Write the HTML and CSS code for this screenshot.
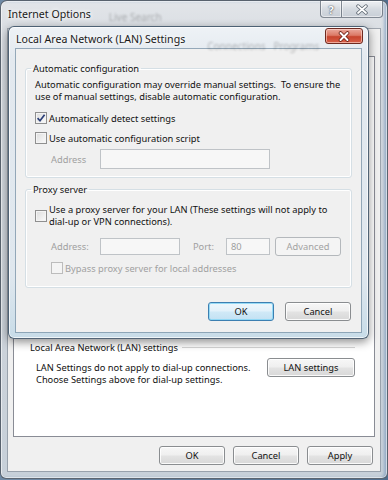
FILE: index.html
```html
<!DOCTYPE html>
<html>
<head>
<meta charset="utf-8">
<title>LAN Settings</title>
<link rel="stylesheet" href="styles.css">
</head>
<body>
<div class="desktop">
  <div class="win outer">
    <div class="titlebar outer-title">
      <span class="title">Internet Options</span>
      <span class="ghost ghost-outer">Live Search</span>
      <div class="caption-btns">
        <span class="cap cap-help">?</span>
        <span class="cap cap-close">
          <svg width="14" height="11" viewBox="0 0 14 11"><path d="M3 2 L11 9 M11 2 L3 9" stroke="#5b6570" stroke-width="3.4" stroke-linecap="round"/><path d="M3 2 L11 9 M11 2 L3 9" stroke="#fff" stroke-width="1.8" stroke-linecap="round"/></svg>
        </span>
      </div>
    </div>
    <div class="outer-client">
      <div class="tabs"></div>
      <div class="page">
        <div class="lan-section">
          <div class="etched-head"><span class="etched-label">Local Area Network (LAN) settings</span><span class="rule"></span></div>
          <div class="lan-row">
            <p class="lan-text">LAN Settings do not apply to dial-up connections.<br>Choose Settings above for dial-up settings.</p>
            <button class="btn lan-btn">LAN settings</button>
          </div>
        </div>
      </div>
      <div class="outer-btns">
        <button class="btn wbtn">OK</button>
        <button class="btn wbtn">Cancel</button>
        <button class="btn wbtn">Apply</button>
      </div>
    </div>
  </div>

  <div class="win lan-dialog">
    <div class="titlebar lan-title">
      <span class="title">Local Area Network (LAN) Settings</span>
      <span class="ghost ghost-inner">Connections&nbsp;&nbsp;&nbsp;Programs</span>
      <span class="red-close">
        <svg width="14" height="11" viewBox="0 0 14 11"><path d="M3.5 2 L10.5 9 M10.5 2 L3.5 9" stroke="#6a1f14" stroke-width="3.6" stroke-linecap="round"/><path d="M3.5 2 L10.5 9 M10.5 2 L3.5 9" stroke="#fff" stroke-width="2" stroke-linecap="round"/></svg>
      </span>
    </div>
    <div class="lan-client">
      <fieldset class="group g-auto">
        <legend>Automatic configuration</legend>
        <p class="desc">Automatic configuration may override manual settings.&nbsp; To ensure the<br>use of manual settings, disable automatic configuration.</p>
        <div class="check-row r-detect"><span class="cb checked"><svg width="10" height="10" viewBox="0 0 10 10"><path d="M1.6 5.2 L4 7.8 L8.6 1.8" fill="none" stroke="#2c3f78" stroke-width="1.7"/></svg></span><span>Automatically detect settings</span></div>
        <div class="check-row r-script"><span class="cb"></span><span>Use automatic configuration script</span></div>
        <div class="field-row r-addr1"><span class="dim lbl-addr1">Address</span><span class="input in-addr1"></span></div>
      </fieldset>
      <fieldset class="group g-proxy">
        <legend>Proxy server</legend>
        <div class="check-row r-proxy"><span class="cb"></span><span class="two-line">Use a proxy server for your LAN (These settings will not apply to<br>dial-up or VPN connections).</span></div>
        <div class="field-row r-addr2">
          <span class="dim lbl-addr2">Address:</span><span class="input in-addr2"></span>
          <span class="dim lbl-port">Port:</span><span class="input in-port"><span class="dim">80</span></span>
          <button class="btn btn-dis adv">Advanced</button>
        </div>
        <div class="check-row r-bypass"><span class="cb cb-dis"></span><span class="dim">Bypass proxy server for local addresses</span></div>
      </fieldset>
      <div class="dlg-btns">
        <button class="btn btn-def dbtn">OK</button>
        <button class="btn dbtn">Cancel</button>
      </div>
    </div>
  </div>
</div>
</body>
</html>
```
FILE: styles.css
```css
* { box-sizing: border-box; }
html, body { margin: 0; padding: 0; }
body {
  width: 388px;
  height: 480px;
  overflow: hidden;
  background: linear-gradient(90deg, #6f8aa6, #4f6e8e);
  font-family: "Noto Sans", "DejaVu Sans", sans-serif;
  font-size: 9.3px;
  color: #111;
}
.desktop { position: relative; width: 388px; height: 480px; }

.win { display: flex; flex-direction: column; }

/* ---------- outer window ---------- */
.outer {
  width: 388px;
  height: 479px;
  border: 1px solid rgba(60, 70, 82, 0.8);
  border-radius: 7px 7px 6px 6px;
  background: linear-gradient(180deg, #e2e5e9 0%, #d3d8de 12%, #cdd3da 60%, #c7d0d9 100%);
  box-shadow: inset 0 0 0 1px rgba(255, 255, 255, 0.55), inset -3px 0 3px rgba(90, 130, 175, 0.45);
}
.titlebar { display: flex; flex: none; }
.outer-title { height: 28px; padding-left: 7px; }
.title {
  font-size: 10.6px;
  line-height: 13px;
  color: #1a1a1a;
  text-shadow: 0 0 4px #fff, 0 0 6px #fff;
  white-space: nowrap;
}
.outer-title .title { margin-top: 7px; }
.ghost {
  filter: blur(1.3px);
  opacity: 0.28;
  font-size: 10px;
  white-space: nowrap;
}
.ghost-outer { margin-top: 9px; margin-left: 18px; }
.caption-btns { margin-left: auto; margin-right: 4px; display: flex; height: 17px; }
.cap {
  display: flex;
  align-items: center;
  justify-content: center;
  height: 17px;
  border: 1px solid rgba(85, 95, 108, 0.7);
  border-top: none;
  background: linear-gradient(180deg, rgba(255,255,255,0.55), rgba(205,212,220,0.6) 50%, rgba(185,194,204,0.6));
  box-shadow: inset 0 0 0 1px rgba(255,255,255,0.5);
}
.cap-help {
  width: 22px;
  border-radius: 0 0 0 4px;
  color: #fff;
  font-weight: bold;
  font-size: 11px;
  text-shadow: 0 0 2px #49525c, 0 0 1px #49525c;
}
.cap-close { width: 41px; border-left: none; border-radius: 0 0 4px 0; }

.outer-client {
  flex: 1;
  margin: 0 7px 7px 7px;
  background: #f0f0f0;
  padding: 6px 5px 0 5px;
  display: flex;
  flex-direction: column;
  box-shadow: 0 0 0 1px rgba(120, 130, 142, 0.6);
}
.tabs { height: 21px; flex: none; }
.page {
  flex: 1;
  background: #fff;
  border: 1px solid #898c95;
  display: flex;
  flex-direction: column;
  justify-content: flex-end;
  padding: 0 19px 50px 16px;
}
.etched-head { display: flex; align-items: center; height: 12px; line-height: 12px; }
.etched-label { white-space: nowrap; }
.rule { flex: 1; height: 2px; margin-left: 4px; border-top: 1px solid #d5d5d5; border-bottom: 1px solid #fff; }
.lan-row { display: flex; margin-top: 4px; padding-left: 6px; }
.lan-text { margin: 4px 0 0 0; line-height: 12px; white-space: nowrap; }
.lan-btn { margin-left: auto; width: 88px; height: 19px; }

.outer-btns {
  flex: none;
  display: flex;
  justify-content: flex-end;
  gap: 8px;
  padding: 9px 2px 6px 0;
}
.wbtn { width: 66px; height: 19px; }

/* ---------- buttons ---------- */
.btn {
  font-family: inherit;
  font-size: 9.3px;
  color: #111;
  padding: 0;
  border: 1px solid #8a8d90;
  border-radius: 3px;
  background: linear-gradient(180deg, #f7f7f7 0%, #efefef 48%, #e3e3e3 52%, #d8d8d8 100%);
  box-shadow: inset 0 0 0 1px rgba(255, 255, 255, 0.85);
  line-height: 15px;
}
.btn-def {
  border-color: #3c7fb1;
  background: linear-gradient(180deg, #eef7fc 0%, #e2f1fa 48%, #d0e9f7 52%, #c3e1f3 100%);
  box-shadow: inset 0 0 0 1px rgba(140, 215, 245, 0.9);
}
.btn-dis {
  border-color: #b4b8bc;
  background: #f4f4f4;
  color: #a3a3a3;
  box-shadow: none;
}

/* ---------- LAN dialog ---------- */
.lan-dialog {
  position: absolute;
  left: 8px;
  top: 26px;
  width: 361px;
  height: 313px;
  border: 1px solid rgba(55, 75, 95, 0.85);
  border-radius: 6px;
  background: linear-gradient(180deg, #eef2f6 0%, #e3e9ef 10%, #dfe7ee 80%, #c8dce8 100%);
  box-shadow: inset 0 0 0 1px rgba(255, 255, 255, 0.7), 0 3px 10px rgba(0, 0, 0, 0.45);
}
.lan-title { height: 22px; padding-left: 7px; }
.lan-title .title { margin-top: 6px; }
.ghost-inner { margin-top: 12px; margin-left: 22px; }
.red-close {
  margin-left: auto;
  margin-right: 5px;
  margin-top: 1px;
  width: 38px;
  height: 16px;
  display: flex;
  align-items: center;
  justify-content: center;
  border: 1px solid #6e2a20;
  border-radius: 3px;
  background: linear-gradient(180deg, #eaa89c 0%, #dc7a67 45%, #c7452e 55%, #d8604a 100%);
  box-shadow: inset 0 0 0 1px rgba(255, 220, 210, 0.6);
}
.lan-client {
  flex: 1;
  margin: 0 7px 6px 7px;
  background: #f0f0f0;
  padding: 13px 9px 0 9px;
  box-shadow: 0 0 0 1px rgba(120, 145, 165, 0.75);
  display: flex;
  flex-direction: column;
}
.group {
  margin: 0;
  min-width: 0;
  border: 1px solid #d5dfe5;
  border-radius: 3px;
  box-shadow: inset 0 0 0 1px #fff;
  padding: 0 6px 8px 9px;
}
.group legend {
  padding: 0 2px;
  margin-left: -4px;
  line-height: 13px;
  height: 13px;
}
.g-proxy { margin-top: 5px; padding-bottom: 12px; }
.desc { margin: 4px 0 0 0; line-height: 12px; white-space: nowrap; }
.check-row { display: flex; align-items: center; height: 14px; white-space: nowrap; }
.cb {
  flex: none;
  width: 12px;
  height: 12px;
  margin-right: 2px;
  border: 1px solid #8f8f8f;
  background: linear-gradient(135deg, #dcdcdc, #fbfbfb);
  box-shadow: inset 0 0 0 1px #f4f4f4;
  display: flex;
  align-items: center;
  justify-content: center;
}
.cb-dis { border-color: #bcbcbc; background: #f4f4f4; box-shadow: none; }
.r-detect { margin-top: 8px; }
.r-script { margin-top: 6px; }
.field-row { display: flex; align-items: center; white-space: nowrap; }
.r-addr1 { margin-top: 4px; padding-left: 16px; height: 20px; }
.dim { color: #a0a0a0; }
.lbl-addr1 { width: 49px; }
.input {
  display: flex;
  align-items: center;
  padding-left: 4px;
  border: 1px solid #bfc3c7;
  background: #f7f7f7;
}
.in-addr1 { width: 170px; height: 20px; }
.r-proxy { height: 24px; margin-top: 8px; }
.two-line { line-height: 12px; }
.r-addr2 { margin-top: 9px; padding-left: 16px; height: 19px; }
.lbl-addr2 { width: 49px; }
.in-addr2 { width: 80px; height: 17px; }
.lbl-port { margin-left: 13px; width: 33px; }
.in-port { width: 44px; height: 17px; }
.adv { margin-left: 5px; width: 66px; height: 19px; }
.r-bypass { margin-top: 5px; padding-left: 16px; }
.dlg-btns { display: flex; justify-content: flex-end; gap: 11px; margin-top: 14px; padding-right: 1px; }
.dbtn { width: 66px; height: 19px; }
```
